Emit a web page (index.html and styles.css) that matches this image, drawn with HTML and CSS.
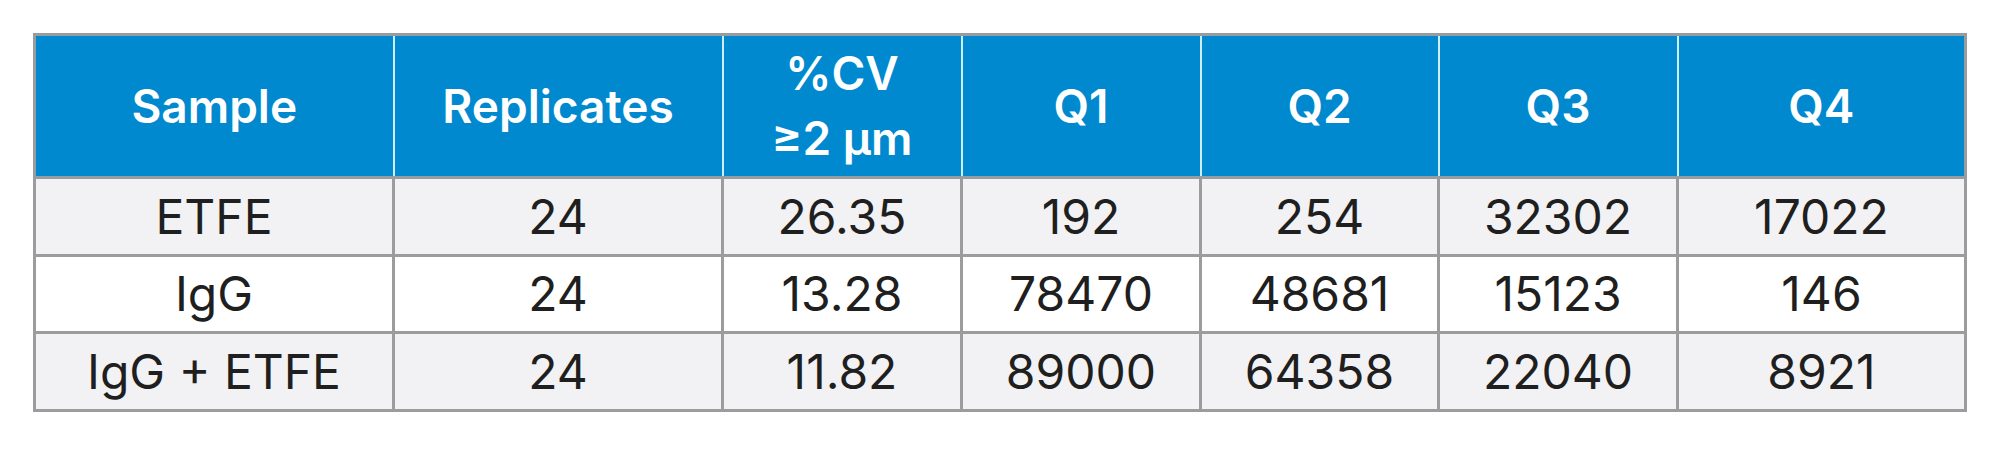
FILE: index.html
```html
<!DOCTYPE html>
<html lang="en">
<head>
<meta charset="utf-8">
<title>Table</title>
<link rel="stylesheet" href="styles.css">
</head>
<body>
<table class="data">
  <colgroup>
    <col class="c-sample">
    <col class="c-rep">
    <col class="c-q">
    <col class="c-q">
    <col class="c-q2">
    <col class="c-q">
    <col class="c-q4">
  </colgroup>
  <thead>
    <tr>
      <th>Sample</th>
      <th>Replicates</th>
      <th>%CV<br>≥2 μm</th>
      <th>Q1</th>
      <th>Q2</th>
      <th>Q3</th>
      <th>Q4</th>
    </tr>
  </thead>
  <tbody>
    <tr class="alt">
      <td>ETFE</td><td>24</td><td>26.35</td><td>192</td><td>254</td><td>32302</td><td>17022</td>
    </tr>
    <tr class="row2">
      <td>IgG</td><td>24</td><td>13.28</td><td>78470</td><td>48681</td><td>15123</td><td>146</td>
    </tr>
    <tr class="alt">
      <td>IgG + ETFE</td><td>24</td><td>11.82</td><td>89000</td><td>64358</td><td>22040</td><td>8921</td>
    </tr>
  </tbody>
</table>
</body>
</html>
```

FILE: styles.css
```css
html, body {
  margin: 0;
  padding: 0;
  background: #ffffff;
}
body {
  padding: 33px 0 0 33px;
  font-family: Inter, "Liberation Sans", Arial, sans-serif;
}
.data {
  border-collapse: collapse;
  table-layout: fixed;
  width: 1934px;
  border: 3px solid #979ca1;
}
.c-sample { width: 359px; }
.c-rep { width: 329px; }
.c-q { width: 239px; }
.c-q2 { width: 238px; }
.c-q4 { width: 288px; }

.data th {
  background: #0089cf;
  color: #ffffff;
  font-weight: 600;
  font-size: 46px;
  line-height: 65px;
  height: 140px;
  padding: 0;
  text-align: center;
  vertical-align: middle;
  border-left: 2px solid #cdeefb;
  border-right: 2px solid #cdeefb;
  border-top: 3px solid #979ca1;
  border-bottom: 3px solid #979ca1;
}
.data th:first-child { border-left: 3px solid #979ca1; }
.data th:last-child { border-right: 3px solid #979ca1; }

.data td {
  color: #1f1f1f;
  font-weight: 400;
  font-size: 48px;
  line-height: 1;
  height: 75px;
  padding: 0;
  text-align: center;
  vertical-align: middle;
  border: 3px solid #9c9c9c;
}
.data tr.row2 td { height: 74px; }
.data tr.alt td { background: #f2f2f4; }
.data tr.row2 td { background: #ffffff; }
```
